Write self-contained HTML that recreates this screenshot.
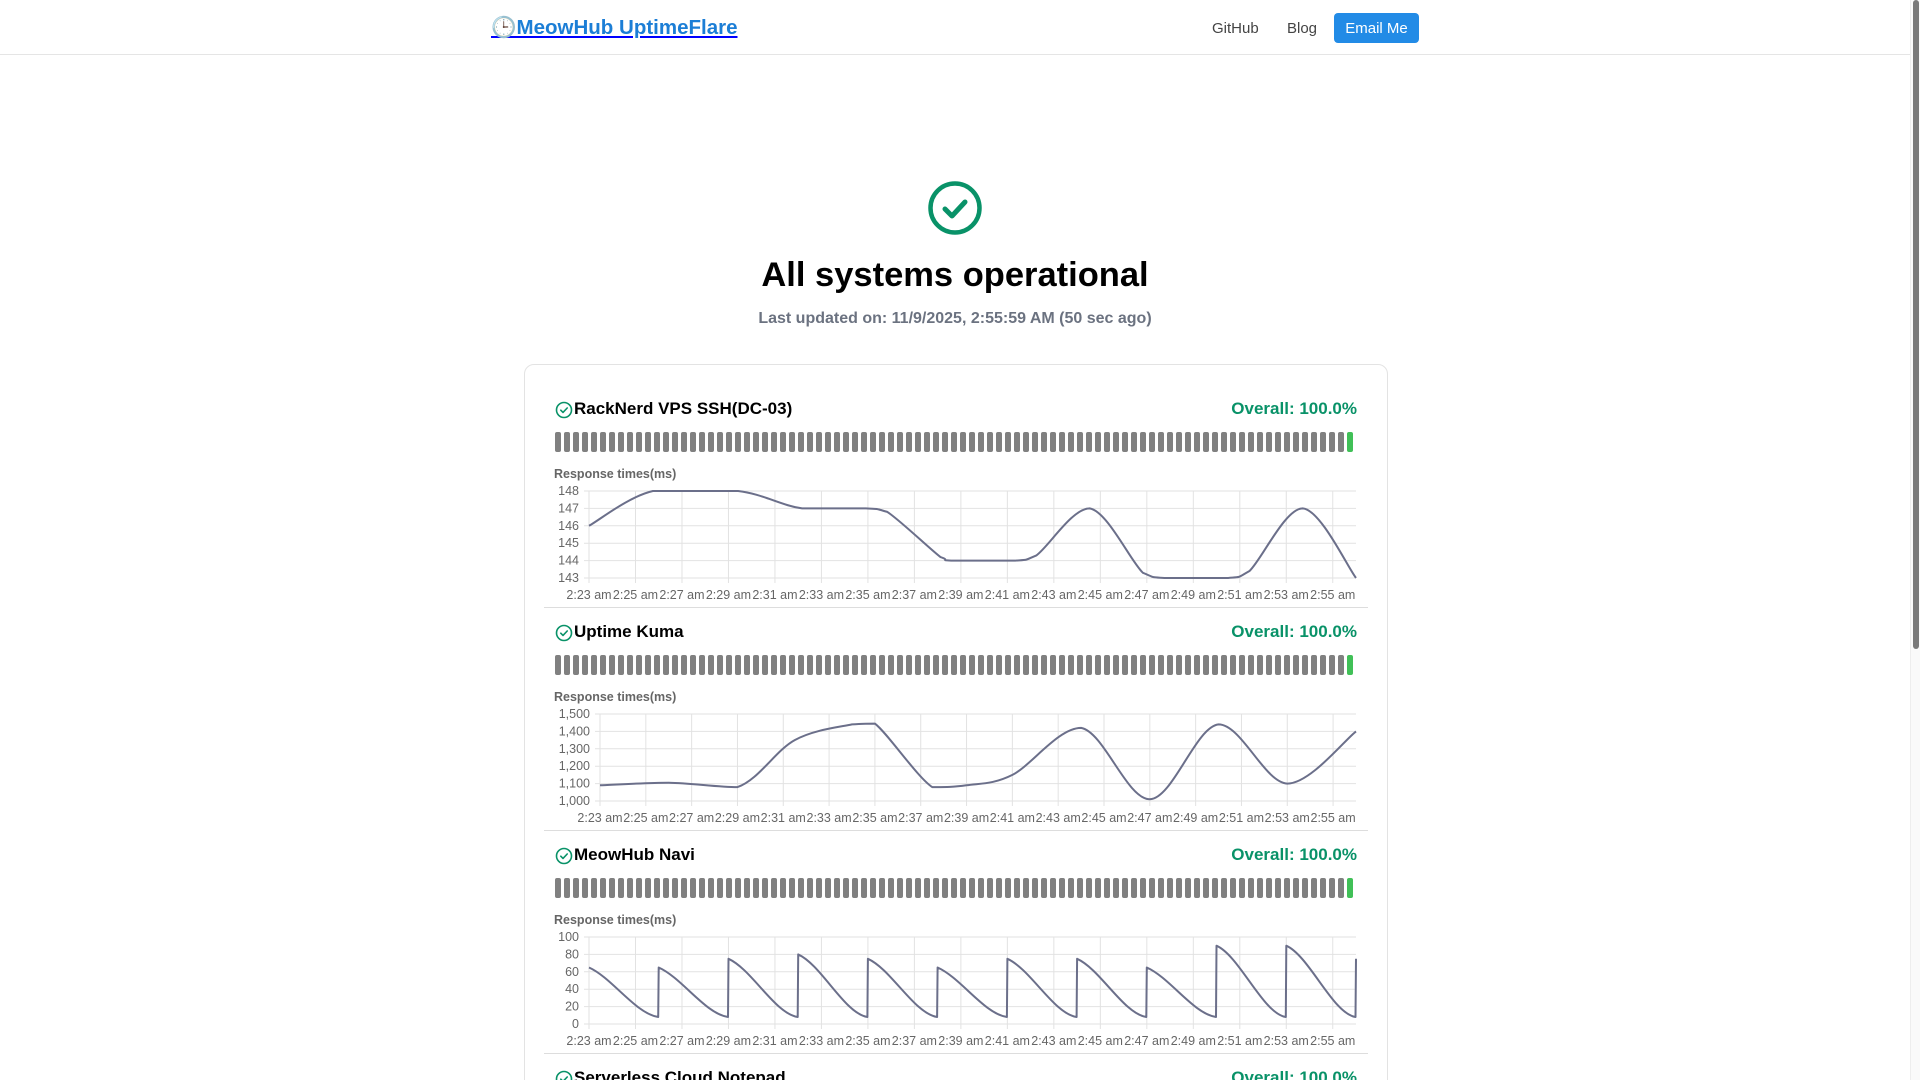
<!DOCTYPE html>
<html><head><meta charset="utf-8"><style>
*{box-sizing:border-box;margin:0;padding:0}
html,body{width:1920px;height:1080px;overflow:hidden;background:#fff;font-family:"Liberation Sans",Arial,sans-serif}
#wrap{position:relative;width:1920px;height:1080px;overflow:hidden}
.hdr{position:absolute;left:0;top:0;width:1910px;height:55px;border-bottom:1px solid #e5e5e5}
.logo{position:absolute;left:491px;top:16px;font-size:20.5px;font-weight:bold;color:#1c7ed6;text-decoration:underline;text-decoration-color:#00f}
.nav{position:absolute;top:20px;font-size:15px;color:#444}
.btn{position:absolute;left:1334px;top:13px;width:85px;height:30px;background:#228be6;border-radius:4px;color:#fff;font-size:15px;text-align:center;line-height:31px}
.sb{position:absolute;left:1910px;top:0;width:10px;height:1080px;background:#fafafa;border-left:1px solid #eee}
.sb div{position:absolute;left:2px;top:0;width:6px;height:649px;background:#7a7a7a;border-radius:3px}
h1{position:absolute;left:0;width:1910px;top:256px;text-align:center;font-size:34.5px;font-weight:bold;color:#000}
.upd{position:absolute;left:0;width:1910px;top:310px;text-align:center;font-size:16px;font-weight:bold;color:#6b7280}
.card{position:absolute;left:524px;top:364px;width:864px;height:800px;border:1px solid #e3e3e3;border-radius:10px}
.mon{position:absolute;left:0;width:1920px}
.title{position:absolute;left:574px;top:0;font-size:17px;font-weight:bold;color:#000}
.ov{position:absolute;right:563px;top:0;font-size:17px;font-weight:bold;color:#099268}
.ico{position:absolute;left:555px;top:2px}
.bars{position:absolute;left:555px;top:33px;display:flex;gap:3px}
.bars i{display:block;width:6px;height:20px;background:#808080;border-radius:2px}
.rt{position:absolute;left:554px;top:68px;font-size:12.5px;font-weight:bold;color:#666}
.sep{position:absolute;left:544px;width:824px;height:1px;background:#ddd}
</style></head><body><div id="wrap">
<div class="hdr"></div>
<div class="logo">🕒MeowHub UptimeFlare</div>
<div class="nav" style="left:1212px">GitHub</div>
<div class="nav" style="left:1287px">Blog</div>
<div class="btn">Email Me</div>
<svg style="position:absolute;left:927px;top:180px" width="56" height="56" viewBox="0 0 56 56"><circle cx="28" cy="28" r="24.5" fill="none" stroke="#099268" stroke-width="4.5"/><path d="M18 29l7 7 13-14" fill="none" stroke="#099268" stroke-width="5" stroke-linecap="round" stroke-linejoin="round"/></svg>
<h1>All systems operational</h1>
<div class="upd">Last updated on: 11/9/2025, 2:55:59 AM (50 sec ago)</div>
<div class="card"></div>
<div id="mons"></div>
<div class="sb"><div></div></div>
</div>
<script>
var mons=[
{t:"RackNerd VPS SSH(DC-03)",y:399,x0:589,yl:["148","147","146","145","144","143"],
 d:[[0,146],[3,148],[7,148],[10,147],[13,147],[14,146.8],[16.5,144.2],[17,144],[20,144],[21,144.3],[23.5,147],[26,143.3],[27,143],[30,143],[31,143.4],[33.5,147],[36,143]],min:143,max:148},
{t:"Uptime Kuma",y:622,x0:600,yl:["1,500","1,400","1,300","1,200","1,100","1,000"],
 d:[[0,1090],[3,1105],[6,1080],[8.5,1350],[11,1440],[12,1445],[14.5,1080],[16,1090],[18,1150],[21,1420],[24,1010],[27,1440],[30,1100],[33,1400]],min:1000,max:1500},
{t:"MeowHub Navi",y:845,x0:589,yl:["100","80","60","40","20","0"],d:null,min:0,max:100}
];
var labels=[];for(var m=23;m<=55;m+=2)labels.push("2:"+m+" am");
var peaks=[65,65,75,80,75,65,75,75,65,90,90,75];
function smooth(P){var d="M"+P[0][0].toFixed(1)+" "+P[0][1].toFixed(1);for(var i=0;i<P.length-1;i++){var p0=P[i-1]||P[i],p1=P[i],p2=P[i+1],p3=P[i+2]||p2;var c1x=p1[0]+(p2[0]-p0[0])/6,c1y=p1[1]+(p2[1]-p0[1])/6,c2x=p2[0]-(p3[0]-p1[0])/6,c2y=p2[1]-(p3[1]-p1[1])/6;var lo=Math.min(p1[1],p2[1]),hi=Math.max(p1[1],p2[1]);c1y=Math.max(lo,Math.min(hi,c1y));c2y=Math.max(lo,Math.min(hi,c2y));d+=" C"+c1x.toFixed(1)+" "+c1y.toFixed(1)+" "+c2x.toFixed(1)+" "+c2y.toFixed(1)+" "+p2[0].toFixed(1)+" "+p2[1].toFixed(1);}return d;}
var h="";
mons.forEach(function(o,k){
 h+='<div class="mon" style="top:'+o.y+'px">';
 h+='<svg class="ico" width="18" height="18" viewBox="0 0 18 18"><circle cx="9" cy="9" r="7.5" fill="none" stroke="#099268" stroke-width="1.6"/><path d="M5.8 9.2l2.2 2.2 4.2-4.4" fill="none" stroke="#099268" stroke-width="1.6" stroke-linecap="round" stroke-linejoin="round"/></svg>';
 h+='<div class="title">'+o.t+'</div><div class="ov">Overall: 100.0%</div><div class="bars">';
 for(var i=0;i<89;i++)h+='<i'+(i==88?' style="background:#40c057"':'')+'></i>';
 h+='</div><div class="rt">Response times(ms)</div>';
 var top=o.y+92,bot=top+87,x0=o.x0,x1=1356;
 var s='<svg style="position:absolute;left:0;top:0" width="1920" height="230" viewBox="0 '+o.y+' 1920 230" font-family="Liberation Sans,Arial,sans-serif" font-size="12.5" fill="#666">';
 for(var j=0;j<6;j++){var yy=top+j*17.4;s+='<line x1="'+(x0-5)+'" x2="'+x1+'" y1="'+yy+'" y2="'+yy+'" stroke="#e2e2e2"/><text x="'+(x0-10)+'" y="'+(yy+4)+'" text-anchor="end">'+o.yl[j]+'</text>';}
 var pm=(x1-x0)/33;
 for(var j=0;j<17;j++){var xx=x0+j*2*pm;s+='<line x1="'+xx+'" x2="'+xx+'" y1="'+top+'" y2="'+(bot+5)+'" stroke="#e2e2e2"/><text x="'+xx+'" y="'+(bot+21)+'" text-anchor="middle">'+labels[j]+'</text>';}
 var Y=function(v){return bot-(v-o.min)/(o.max-o.min)*87;};
 var dd;
 if(o.d){var sc=o.d[o.d.length-1][0];dd=smooth(o.d.map(function(p){return [x0+p[0]*(x1-x0)/sc,Y(p[1])]}));}
 else{dd="";for(var q=0;q<11;q++){var a=x0+q*3*pm,b=x0+(q+1)*3*pm-0.5,pk=peaks[q];dd+=(q?" L":"M")+a.toFixed(1)+" "+Y(pk).toFixed(1)+" C"+(a+pm).toFixed(1)+" "+Y(pk-12).toFixed(1)+" "+(a+2*pm).toFixed(1)+" "+Y(12).toFixed(1)+" "+b.toFixed(1)+" "+Y(8).toFixed(1);}dd+=" L"+x1+" "+Y(75).toFixed(1);}
 s+='<path d="'+dd+'" fill="none" stroke="#6b6f8a" stroke-width="2" stroke-linejoin="round"/></svg>';
 h+=s+'<div class="sep" style="top:208px"></div></div>';
});
h+='<div class="mon" style="top:1068px"><svg class="ico" width="18" height="18" viewBox="0 0 18 18"><circle cx="9" cy="9" r="7.5" fill="none" stroke="#099268" stroke-width="1.6"/><path d="M5.8 9.2l2.2 2.2 4.2-4.4" fill="none" stroke="#099268" stroke-width="1.6" stroke-linecap="round" stroke-linejoin="round"/></svg><div class="title">Serverless Cloud Notepad</div><div class="ov">Overall: 100.0%</div></div>';
document.getElementById("mons").innerHTML=h;
</script>
</body></html>
